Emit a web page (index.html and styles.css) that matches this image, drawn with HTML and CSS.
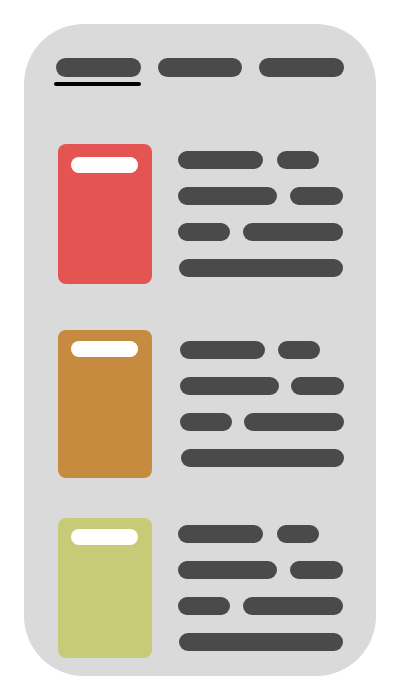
FILE: index.html
```html
<!DOCTYPE html>
<html lang="en">
<head>
<meta charset="utf-8">
<title>Wireframe</title>
<link rel="stylesheet" href="styles.css">
</head>
<body>
<div class="phone">
  <nav class="tabs">
    <div class="tab tab-active"><span class="tab-pill"></span><span class="tab-line"></span></div>
    <div class="tab"><span class="tab-pill"></span></div>
    <div class="tab"><span class="tab-pill"></span></div>
  </nav>
  <div class="cards">
    <div class="card card-1">
      <div class="thumb thumb-red"><span class="thumb-pill"></span></div>
      <div class="lines">
        <div class="row"><span class="bar w85"></span><span class="bar w42"></span></div>
        <div class="row"><span class="bar w99"></span><span class="bar w53"></span></div>
        <div class="row"><span class="bar w52"></span><span class="bar w100"></span></div>
        <div class="row row-full"><span class="bar wfull"></span></div>
      </div>
    </div>
    <div class="card card-2">
      <div class="thumb thumb-orange"><span class="thumb-pill"></span></div>
      <div class="lines lines-shift">
        <div class="row"><span class="bar w85"></span><span class="bar w42"></span></div>
        <div class="row"><span class="bar w99"></span><span class="bar w53"></span></div>
        <div class="row"><span class="bar w52"></span><span class="bar w100"></span></div>
        <div class="row row-full"><span class="bar wfull"></span></div>
      </div>
    </div>
    <div class="card card-3">
      <div class="thumb thumb-green"><span class="thumb-pill"></span></div>
      <div class="lines">
        <div class="row"><span class="bar w85"></span><span class="bar w42"></span></div>
        <div class="row"><span class="bar w99"></span><span class="bar w53"></span></div>
        <div class="row"><span class="bar w52"></span><span class="bar w100"></span></div>
        <div class="row row-full"><span class="bar wfull"></span></div>
      </div>
    </div>
  </div>
</div>
</body>
</html>
```
FILE: styles.css
```css
* { box-sizing: border-box; }
html, body {
  margin: 0;
  padding: 0;
  background: #ffffff;
  font-family: "Liberation Sans", Arial, sans-serif;
}
.phone {
  width: 352px;
  height: 652px;
  margin: 24px 0 0 24px;
  background: #dadada;
  border-radius: 60px;
  padding: 34px 32px 0 32px;
  display: flex;
  flex-direction: column;
}
.tabs {
  display: flex;
  gap: 17px;
  align-items: flex-start;
}
.tab {
  flex: 1 1 0;
  display: flex;
  flex-direction: column;
}
.tab-pill {
  display: block;
  height: 19px;
  border-radius: 9.5px;
  background: #4a4a4a;
}
.tab-line {
  display: block;
  height: 3.5px;
  margin: 5px 0 0 -2px;
  border-radius: 2px;
  background: #000000;
}
.cards {
  display: flex;
  flex-direction: column;
  padding-left: 2px;
  margin-top: 58.5px;
}
.card {
  display: flex;
  align-items: center;
  gap: 26px;
}
.card-2 { margin-top: 46px; }
.card-3 { margin-top: 40px; }
.thumb {
  width: 94px;
  height: 140px;
  border-radius: 8px;
  padding: 12px 13px;
  flex: none;
}
.card-1 .thumb { padding-top: 13px; }
.card-2 .thumb { height: 148px; padding-top: 11px; }
.card-3 .thumb { padding-top: 11px; }
.thumb-pill {
  display: block;
  width: 67px;
  height: 16px;
  border-radius: 8px;
  background: #ffffff;
}
.thumb-red { background: #e35452; }
.thumb-orange { background: #c78b40; }
.thumb-green { background: #c7cb78; }
.lines {
  width: 165px;
  display: flex;
  flex-direction: column;
  gap: 17.5px;
}
.lines-shift { margin-left: 2px; }
.row {
  display: flex;
  justify-content: space-between;
}
.row-full { padding-left: 1px; }
.bar {
  display: block;
  height: 18.5px;
  border-radius: 9px;
  background: #4a4a4a;
}
.w85 { width: 85px; margin-right: auto; }
.w42 { width: 42px; margin-right: 24px; }
.w99 { width: 99px; }
.w53 { width: 53px; }
.w52 { width: 52px; }
.w100 { width: 100px; }
.wfull { flex: 1; }
```
